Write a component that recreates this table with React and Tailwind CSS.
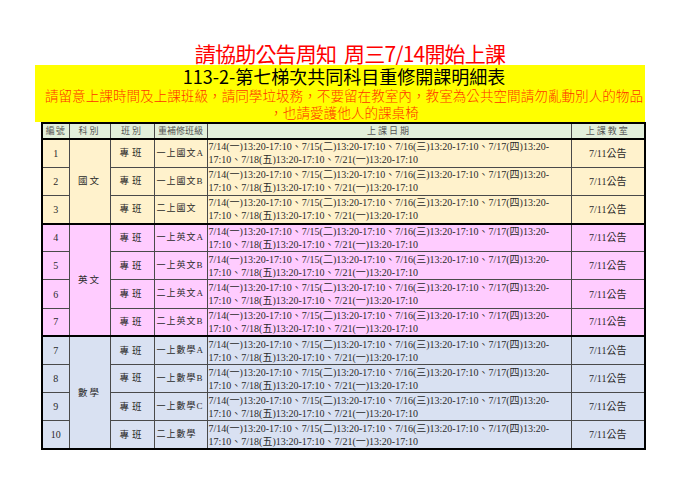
const dates1 = "7/14(一)13:20-17:10、7/15(二)13:20-17:10、7/16(三)13:20-17:10、7/17(四)13:20-";
const dates2 = "17:10、7/18(五)13:20-17:10、7/21(一)13:20-17:10";

const groups = [
  {
    subject: "國文",
    bg: "bg-[#fff2cc]",
    rows: [
      { no: "1", cls: "一上國文A" },
      { no: "2", cls: "一上國文B" },
      { no: "3", cls: "二上國文" },
    ],
  },
  {
    subject: "英文",
    bg: "bg-[#ffccff]",
    rows: [
      { no: "4", cls: "一上英文A" },
      { no: "5", cls: "一上英文B" },
      { no: "6", cls: "二上英文A" },
      { no: "7", cls: "二上英文B" },
    ],
  },
  {
    subject: "數學",
    bg: "bg-[#d9e1f2]",
    rows: [
      { no: "7", cls: "一上數學A" },
      { no: "8", cls: "一上數學B" },
      { no: "9", cls: "一上數學C" },
      { no: "10", cls: "二上數學" },
    ],
  },
];

const serif = "font-['Liberation_Serif','Noto_Sans_CJK_TC',serif]";
const cell = "border border-[#4a4a4a] p-0";

const App = () => {
  return (
    <div className="w-[700px] h-[494px] bg-white flex flex-col items-center pt-[41px]">
      <h1 className="text-[21px] leading-[24px] text-[#ff0000] font-['Noto_Sans_CJK_TC',sans-serif] tracking-[-0.8px]">
        請協助公告周知&nbsp;&nbsp;周三7/14開始上課
      </h1>

      <div className="w-[610px] ml-[-20px] pl-[8px] bg-[#ffff00] flex flex-col items-center pt-[1px] pb-[1px] font-['Noto_Sans_CJK_TC',sans-serif]">
        <div className="text-[18px] leading-[21px] text-black">113-2-第七梯次共同科目重修開課明細表</div>
        <div className="text-[13.6px] leading-[17px] text-[#ff3300] font-light whitespace-nowrap">
          請留意上課時間及上課班級，請同學垃圾務，不要留在教室內，教室為公共空間請勿亂動別人的物品
        </div>
        <div className="text-[13.6px] leading-[17px] text-[#ff3300] font-light">，也請愛護他人的課桌椅</div>
      </div>

      <table
        className={`ml-[-13px] border-collapse border-2 border-black text-[#2a2a2a] ${serif} table-fixed w-[603px]`}
      >
        <colgroup>
          <col className="w-[27px]" />
          <col className="w-[41px]" />
          <col className="w-[44px]" />
          <col className="w-[53px]" />
          <col className="w-[364px]" />
          <col className="w-[74px]" />
        </colgroup>
        <thead>
          <tr className="h-[16px] bg-[#e2efda] text-[9px] leading-[10px] text-[#555] border-b-2 border-black">
            <th className={`${cell} font-normal tracking-[1px]`}>編號</th>
            <th className={`${cell} font-normal tracking-[2px]`}>科別</th>
            <th className={`${cell} font-normal tracking-[2px]`}>班別</th>
            <th className={`${cell} font-normal`}>重補修班級</th>
            <th className={`${cell} font-normal tracking-[2px]`}>上課日期</th>
            <th className={`${cell} font-normal tracking-[2px]`}>上課教室</th>
          </tr>
        </thead>
        {groups.map((g) => (
          <tbody key={g.subject} className={`${g.bg} border-2 border-black`}>
            {g.rows.map((r, i) => (
              <tr key={r.no + r.cls} className="h-[28.2px]">
                <td className={`${cell} text-center text-[10px]`}>{r.no}</td>
                {i === 0 && (
                  <td rowSpan={g.rows.length} className={`${cell} text-center text-[9.5px] tracking-[2px]`}>
                    {g.subject}
                  </td>
                )}
                <td className={`${cell} text-center text-[9.5px] tracking-[3px]`}>專班</td>
                <td className={`${cell} pl-[2px] text-[9px] tracking-[1px] whitespace-nowrap overflow-hidden`}>{r.cls}</td>
                <td className={`${cell} pl-[1px] text-[10px] leading-[13px] whitespace-nowrap`}>
                  {dates1}
                  <br />
                  {dates2}
                </td>
                <td className={`${cell} text-center text-[10px]`}>7/11公告</td>
              </tr>
            ))}
          </tbody>
        ))}
      </table>
    </div>
  );
};

export default App;
